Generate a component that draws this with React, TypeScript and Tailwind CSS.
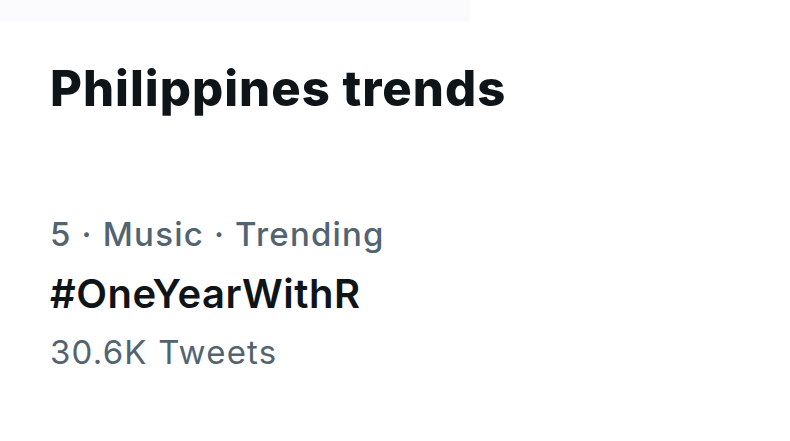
import React from 'react';

const App: React.FC = () => {
  return (
    <div className="relative w-[790px] h-[441px] bg-white overflow-hidden" style={{ fontFamily: 'Inter, "Noto Sans", sans-serif' }}>
      {/* faint strip left over at the top of the capture */}
      <div className="h-[22px] w-[470px] bg-[#fbfbfd]"></div>

      <div className="pl-[50px]">
        <h2 className="mt-[43px] text-[49px] leading-[48px] font-extrabold tracking-[1px] text-[#0f1419]">
          Philippines trends
        </h2>

        <div className="mt-[93px]">
          <p className="text-[33px] leading-[56px] font-medium tracking-[1.2px] text-[#536471]">5 · Music · Trending</p>
          <p className="text-[40px] leading-[63px] font-semibold tracking-[0.5px] text-[#0f1419]">#OneYearWithR</p>
          <p className="text-[33px] leading-[54px] tracking-[1.2px] text-[#536471]">30.6K Tweets</p>
        </div>
      </div>
    </div>
  );
};

export default App;
